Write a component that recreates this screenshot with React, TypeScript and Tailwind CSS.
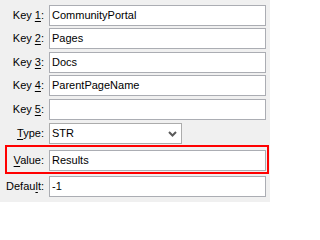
import React from "react";

const font = { fontFamily: '"Liberation Sans", Arial, sans-serif' };

function Label({ pre, u, post, w = "w-[44px]" }: { pre: string; u: string; post: string; w?: string }) {
  return (
    <div className={`${w} shrink-0 text-right text-[11px] leading-none text-black whitespace-pre`}>
      {pre}
      <span className="underline underline-offset-[2px]">{u}</span>
      {post}
    </div>
  );
}

function TextBox({ value }: { value: string }) {
  return (
    <div className="ml-[5px] flex h-[21px] flex-1 items-center border border-[#abadb3] bg-white pl-[2px] text-[11px] leading-none text-black">
      {value}
    </div>
  );
}

export default function App() {
  return (
    <div className="h-[202px] w-[270px] bg-[#f0f0f0] pt-[5px] pr-[4px]" style={font}>
      <div className="flex items-center">
        <Label pre="Key " u="1" post=":" />
        <TextBox value="CommunityPortal" />
      </div>
      <div className="mt-[2px] flex items-center">
        <Label pre="Key " u="2" post=":" />
        <TextBox value="Pages" />
      </div>
      <div className="mt-[3px] flex items-center">
        <Label pre="Key " u="3" post=":" />
        <TextBox value="Docs" />
      </div>
      <div className="mt-[2px] flex items-center">
        <Label pre="Key " u="4" post=":" />
        <TextBox value="ParentPageName" />
      </div>
      <div className="mt-[3px] flex items-center">
        <Label pre="Key " u="5" post=":" />
        <TextBox value="" />
      </div>
      <div className="mt-[3px] flex items-center">
        <Label pre="" u="T" post="ype:" />
        <div className="ml-[5px] flex h-[21px] w-[133px] items-center justify-between border border-[#acacac] bg-white pl-[2px] pr-[3px] text-[11px] leading-none text-black">
          <span>STR</span>
          <svg width="9" height="6" viewBox="0 0 9 6" className="mr-[1px]">
            <path d="M1 1 L4.5 4.5 L8 1" fill="none" stroke="#5a5a5a" strokeWidth="2" />
          </svg>
        </div>
      </div>
      <div className="mt-[1px] ml-[5px] -mr-[3px] flex items-center border-2 border-[#ff0000] pt-[3px] pb-[1px] pr-[1px]">
        <Label pre="" u="V" post="alue:" w="w-[37px]" />
        <TextBox value="Results" />
      </div>
      <div className="mt-[2px] flex items-center">
        <Label pre="Defau" u="l" post="t:" />
        <TextBox value="-1" />
      </div>
    </div>
  );
}
